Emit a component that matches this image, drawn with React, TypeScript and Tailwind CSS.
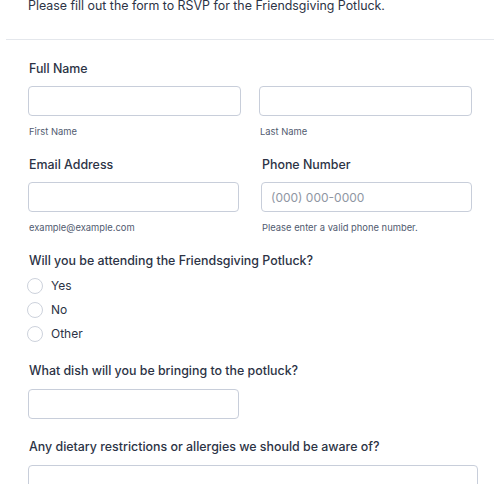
import React from 'react';

const labelCls = 'block text-[12.4px] leading-[16px] font-medium text-[#2c3345]';
const subCls = 'block mt-[9px] ml-[1px] text-[9.4px] leading-[14px] text-[#515b6f]';
const inputCls =
  'block h-[30px] w-full rounded-[4px] border border-[#c8ceda] bg-white px-[9px] text-[12px] text-[#2c3345] placeholder:text-[#8f96a3] outline-none';

const Radio: React.FC<{ label: string }> = ({ label }) => (
  <label className="flex h-[24px] items-center">
    <span className="ml-[-1px] h-[16px] w-[16px] rounded-full border border-[#cdd2dc] bg-white" />
    <span className="ml-[8px] text-[12px] text-[#2c3345]">{label}</span>
  </label>
);

export default function App() {
  return (
    <div className="min-h-[484px] bg-white font-['Inter',sans-serif] overflow-hidden">
      <div className="mx-[6px]">
        <p className="-mt-[2px] px-[22px] text-[12.4px] leading-[16px] text-[#2c3345]">
          Please fill out the form to RSVP for the Friendsgiving Potluck.
        </p>
        <div className="mt-[25px] border-t border-[#e4e7ec]" />

        <div className="px-[22px]">
          {/* Full name */}
          <div className="mt-[21px]">
            <span className={`${labelCls} ml-[1px]`}>Full Name</span>
            <div className="mt-[9px] grid grid-cols-[213px_213px] gap-x-[18px]">
              <div>
                <input className={inputCls} />
                <span className={subCls}>First Name</span>
              </div>
              <div>
                <input className={inputCls} />
                <span className={subCls}>Last Name</span>
              </div>
            </div>
          </div>

          {/* Email + phone */}
          <div className="mt-[18px] grid grid-cols-[211px_211px] gap-x-[22px]">
            <div>
              <span className={`${labelCls} ml-[1px]`}>Email Address</span>
              <input className={`${inputCls} mt-[9px]`} />
              <span className={subCls}>example@example.com</span>
            </div>
            <div>
              <span className={`${labelCls} ml-[1px]`}>Phone Number</span>
              <input className={`${inputCls} mt-[9px]`} placeholder="(000) 000-0000" />
              <span className={subCls}>Please enter a valid phone number.</span>
            </div>
          </div>

          {/* Attending */}
          <div className="mt-[18px]">
            <span className={`${labelCls} ml-[1px]`}>Will you be attending the Friendsgiving Potluck?</span>
            <div className="mt-[5px] flex flex-col">
              <Radio label="Yes" />
              <Radio label="No" />
              <Radio label="Other" />
            </div>
          </div>

          {/* Dish */}
          <div className="mt-[17px]">
            <span className={`${labelCls} ml-[1px]`}>What dish will you be bringing to the potluck?</span>
            <input className={`${inputCls} mt-[10px] !w-[211px]`} />
          </div>

          {/* Dietary */}
          <div className="mt-[20px]">
            <span className={`${labelCls} ml-[1px]`}>Any dietary restrictions or allergies we should be aware of?</span>
            <textarea className="mt-[10px] block h-[80px] w-[450px] resize-none rounded-[4px] border border-[#c8ceda] bg-white outline-none" />
          </div>
        </div>
      </div>
    </div>
  );
}
